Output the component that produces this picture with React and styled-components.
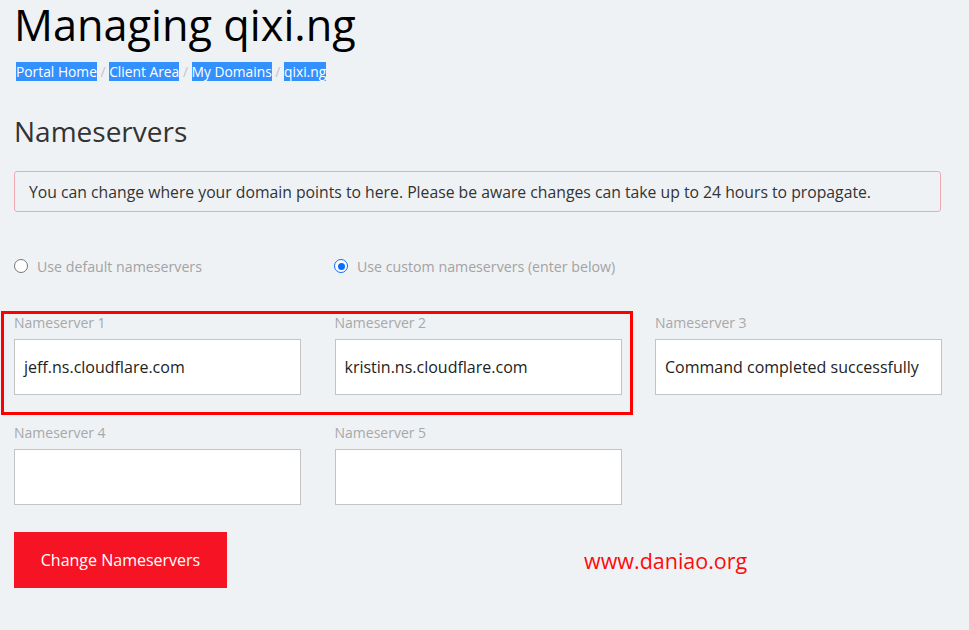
import React from 'react';
import styled, { createGlobalStyle } from 'styled-components';

const GlobalStyle = createGlobalStyle`
  html, body {
    margin: 0;
    padding: 0;
    background: #eff2f5;
  }
  body {
    font-family: "Open Sans", "Noto Sans", Arial, sans-serif;
  }
  * { box-sizing: border-box; }
`;

const Page = styled.div`
  width: 969px;
  height: 630px;
  padding: 0 28px 0 14px;
  overflow: hidden;
  background: #eff2f5;
`;

const Title = styled.h1`
  margin: 0;
  padding-top: 1px;
  font-size: 43.3px;
  font-weight: 400;
  line-height: 48px;
  color: #000;
`;

const Crumbs = styled.div`
  display: flex;
  align-items: center;
  gap: 3.6px;
  margin-top: 13px;
  padding-left: 2px;
  font-size: 13.8px;
  line-height: 19px;
  color: #c0c4c8;
`;

const Crumb = styled.span`
  background: #3390ff;
  color: #fff;
`;

const Heading = styled.h2`
  margin: 0;
  margin-top: 32px;
  font-size: 28px;
  font-weight: 400;
  line-height: 36px;
  color: #333;
`;

const Alert = styled.div`
  margin-top: 22px;
  height: 41px;
  display: flex;
  align-items: center;
  padding: 0 14px;
  border: 1px solid #efa9b1;
  border-radius: 3px;
  font-size: 15.75px;
  color: #333;
`;

const RadioRow = styled.div`
  display: grid;
  grid-template-columns: 320px 1fr;
  margin-top: 44px;
  height: 20px;
  align-items: center;
`;

const RadioOption = styled.label`
  display: flex;
  align-items: center;
  gap: 9px;
  font-size: 14.2px;
  color: #a3a3a3;
`;

const RadioDot = styled.span`
  width: 14px;
  height: 14px;
  border-radius: 50%;
  flex: none;
  background: #fff;
  border: ${p => (p.checked ? '1.5px solid #0b6bff' : '1px solid #777')};
  display: flex;
  align-items: center;
  justify-content: center;
  &::after {
    content: '';
    display: ${p => (p.checked ? 'block' : 'none')};
    width: 7px;
    height: 7px;
    border-radius: 50%;
    background: #0b6bff;
  }
`;

const Fields = styled.div`
  position: relative;
  margin-top: 37px;
  display: grid;
  grid-template-columns: repeat(3, 287px);
  column-gap: 33.5px;
  row-gap: 28px;
`;

const Field = styled.div`
  display: flex;
  flex-direction: column;
`;

const Label = styled.span`
  font-size: 14px;
  line-height: 20px;
  color: #a8a8a8;
`;

const Input = styled.div`
  margin-top: 6px;
  height: 56px;
  background: #fff;
  border: 1px solid #c4c4c4;
  display: flex;
  align-items: center;
  padding-left: 9px;
  font-size: 16px;
  color: #222;
`;

const Highlight = styled.div`
  position: absolute;
  left: -13px;
  top: -2px;
  width: 632px;
  height: 104px;
  border: 3px solid #ff0000;
  pointer-events: none;
`;

const Actions = styled.div`
  display: flex;
  align-items: center;
  margin-top: 27px;
`;

const SubmitButton = styled.button`
  width: 213px;
  height: 56px;
  border: none;
  border-radius: 0;
  background: #f61424;
  color: #fff;
  font-family: "Open Sans", Arial, sans-serif;
  font-size: 16px;
  padding: 0;
  cursor: pointer;
`;

const Watermark = styled.span`
  margin-left: 357px;
  font-size: 21.5px;
  color: #ff0a0a;
`;

const nameservers = [
  { label: 'Nameserver 1', value: 'jeff.ns.cloudflare.com' },
  { label: 'Nameserver 2', value: 'kristin.ns.cloudflare.com' },
  { label: 'Nameserver 3', value: 'Command completed successfully' },
  { label: 'Nameserver 4', value: '' },
  { label: 'Nameserver 5', value: '' },
];

export default function App() {
  return (
    <>
      <GlobalStyle />
      <Page>
        <Title>Managing qixi.ng</Title>
        <Crumbs>
          <Crumb>Portal Home</Crumb>/
          <Crumb>Client Area</Crumb>/
          <Crumb>My Domains</Crumb>/
          <Crumb>qixi.ng</Crumb>
        </Crumbs>

        <Heading>Nameservers</Heading>
        <Alert>
          You can change where your domain points to here. Please be aware changes can take up to 24 hours to propagate.
        </Alert>

        <RadioRow>
          <RadioOption>
            <RadioDot />
            Use default nameservers
          </RadioOption>
          <RadioOption>
            <RadioDot checked />
            Use custom nameservers (enter below)
          </RadioOption>
        </RadioRow>

        <Fields>
          {nameservers.map(ns => (
            <Field key={ns.label}>
              <Label>{ns.label}</Label>
              <Input>{ns.value}</Input>
            </Field>
          ))}
          <Highlight />
        </Fields>

        <Actions>
          <SubmitButton>Change Nameservers</SubmitButton>
          <Watermark>www.daniao.org</Watermark>
        </Actions>
      </Page>
    </>
  );
}
